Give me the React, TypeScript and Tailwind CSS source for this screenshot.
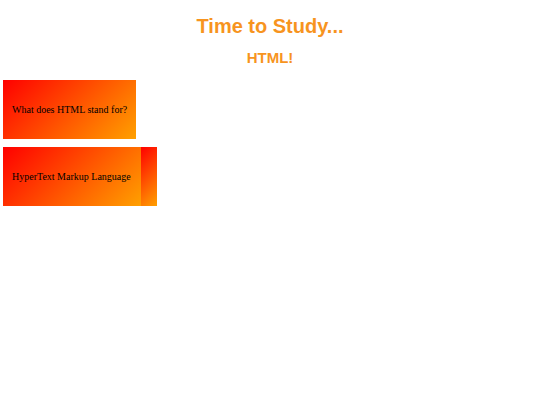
export default function App() {
  return (
    <div className="min-h-[405px] bg-white pt-[14px] px-[3px] font-['Liberation_Sans',Arial,sans-serif]">
      <h1 className="text-center text-[20px] leading-[24px] font-bold text-[#f7941e]">Time to Study...</h1>
      <h2 className="mt-[11px] text-center text-[15px] leading-[18px] font-bold text-[#f7941e]">HTML!</h2>

      <div className="mt-[13px] flex flex-col items-start gap-[8px] font-['Liberation_Serif','Times_New_Roman',serif] text-[10px] text-black">
        {/* question card */}
        <div className="flex h-[59px] w-[133px] items-center bg-[linear-gradient(135deg,#ff0000,#ffa000)] pl-[9px]">
          What does HTML stand for?
        </div>

        {/* answer card, with the edge of the back face showing */}
        <div className="flex h-[59px]">
          <div className="flex w-[138px] items-center bg-[linear-gradient(135deg,#ff0000,#ffa000)] pl-[9px]">
            HyperText Markup Language
          </div>
          <div className="w-[16px] bg-[linear-gradient(135deg,#ff0000,#ffa000)]" />
        </div>
      </div>
    </div>
  )
}
